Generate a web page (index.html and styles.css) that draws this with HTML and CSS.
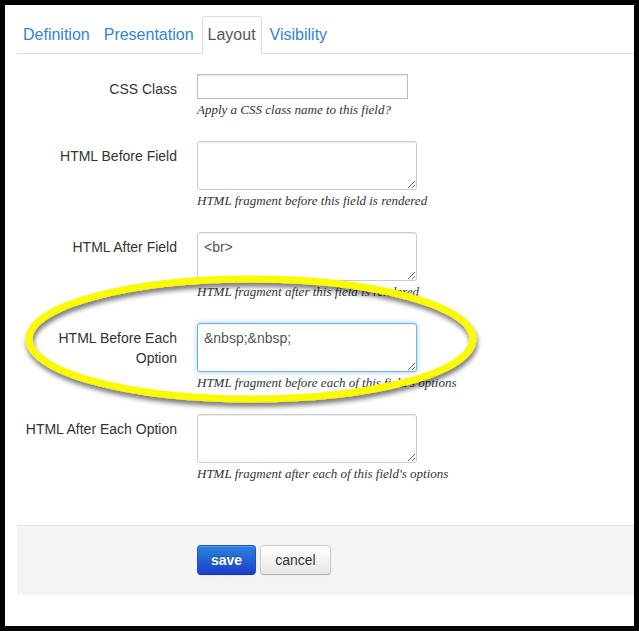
FILE: index.html
```html
<!DOCTYPE html>
<html lang="en">
<head>
    <meta charset="UTF-8">
    <meta name="viewport" content="width=device-width, initial-scale=1.0">
    <title>Field Layout</title>
    <link rel="stylesheet" href="styles.css">
</head>
<body>
    <div class="window">
        <ul class="tabs">
            <li><a href="#">Definition</a></li>
            <li><a href="#">Presentation</a></li>
            <li class="active"><a href="#">Layout</a></li>
            <li><a href="#">Visibility</a></li>
        </ul>

        <form class="form">
            <div class="row">
                <label class="label">CSS Class</label>
                <div class="control">
                    <input type="text" class="input">
                    <p class="help">Apply a CSS class name to this field?</p>
                </div>
            </div>

            <div class="row">
                <label class="label">HTML Before Field</label>
                <div class="control">
                    <textarea class="textarea"></textarea>
                    <p class="help">HTML fragment before this field is rendered</p>
                </div>
            </div>

            <div class="row">
                <label class="label">HTML After Field</label>
                <div class="control">
                    <textarea class="textarea">&lt;br&gt;</textarea>
                    <p class="help">HTML fragment after this field is rendered</p>
                </div>
            </div>

            <div class="row">
                <label class="label">HTML Before Each Option</label>
                <div class="control">
                    <textarea class="textarea focused">&amp;nbsp;&amp;nbsp;</textarea>
                    <p class="help">HTML fragment before each of this field's options</p>
                </div>
            </div>

            <div class="row">
                <label class="label">HTML After Each Option</label>
                <div class="control">
                    <textarea class="textarea"></textarea>
                    <p class="help">HTML fragment after each of this field's options</p>
                </div>
            </div>

            <div class="actions">
                <button type="button" class="btn btn-primary">save</button>
                <button type="button" class="btn">cancel</button>
            </div>
        </form>
    </div>

    <!-- annotation drawn over the screenshot -->
    <svg class="highlight" width="639" height="631" viewBox="0 0 639 631">
        <defs>
            <filter id="shadow" x="-10%" y="-30%" width="120%" height="160%">
                <feDropShadow dx="1" dy="4" stdDeviation="2.5" flood-color="#000" flood-opacity="0.55"/>
            </filter>
        </defs>
        <ellipse cx="251" cy="339" rx="222" ry="60" fill="none" stroke="#fafa00" stroke-width="7" filter="url(#shadow)"/>
    </svg>
</body>
</html>
```

FILE: styles.css
```css
body {
    margin: 0;
    padding: 5px;
    background: #000;
    font-family: 'Liberation Sans', Arial, sans-serif;
    font-size: 14px;
    color: #333;
    position: relative;
}

.window {
    background: #fff;
    height: 621px;
    padding: 11px 0 0 12px;
    box-sizing: border-box;
}

.tabs {
    display: flex;
    list-style: none;
    margin: 0;
    padding: 0;
    border-bottom: 1px solid #ddd;
}

.tabs li {
    margin-bottom: -1px;
    margin-right: 2px;
}

.tabs a {
    display: block;
    padding: 8px 5px;
    line-height: 20px;
    font-size: 16px;
    color: #3383d6;
    text-decoration: none;
    border: 1px solid transparent;
    border-radius: 4px 4px 0 0;
}

.tabs .active a {
    color: #555;
    background: #fff;
    border-color: #ddd #ddd #fff;
}

.form {
    margin-top: 20px;
}

.row {
    display: flex;
    margin-bottom: 22px;
}

.label {
    width: 160px;
    flex-shrink: 0;
    text-align: right;
    padding-top: 5px;
    line-height: 20px;
}

.control {
    margin-left: 20px;
}

.input,
.textarea {
    display: block;
    box-sizing: border-box;
    font-family: 'Liberation Sans', Arial, sans-serif;
    font-size: 14px;
    color: #555;
    border: 1px solid #ccc;
    border-radius: 3px;
    box-shadow: inset 0 1px 1px rgba(0, 0, 0, 0.075);
    margin: 0;
    outline: none;
}

.input {
    width: 211px;
    height: 25px;
    padding: 2px 6px;
    border-radius: 0;
    border-color: #bbb;
}

.textarea {
    width: 220px;
    height: 49px;
    padding: 4px 6px;
    line-height: 20px;
}

.textarea.focused {
    border-color: #76b0ea;
    box-shadow: inset 0 1px 1px rgba(0, 0, 0, 0.075), 0 0 5px rgba(82, 168, 236, 0.6);
}

.help {
    margin: 2px 0 0;
    line-height: 18px;
    font-family: 'Liberation Serif', 'Times New Roman', serif;
    font-style: italic;
    font-size: 13px;
    color: #333;
}

.actions {
    display: flex;
    gap: 4px;
    margin-top: 42px;
    padding: 19px 0 20px 180px;
    background: #f4f4f4;
    border-top: 1px solid #e5e5e5;
}

.btn {
    font-family: 'Liberation Sans', Arial, sans-serif;
    font-size: 14px;
    line-height: 20px;
    padding: 4px 14px;
    color: #333;
    background: linear-gradient(#fff, #e6e6e6);
    border: 1px solid #ccc;
    border-bottom-color: #b3b3b3;
    border-radius: 4px;
    box-shadow: inset 0 1px 0 rgba(255, 255, 255, 0.2), 0 1px 2px rgba(0, 0, 0, 0.05);
}

.btn-primary {
    padding: 4px 13px;
    color: #fff;
    font-weight: bold;
    background: linear-gradient(#2b82dc, #1b3fcc);
    border-color: #1d4fc9 #1d4fc9 #1436a8;
    text-shadow: 0 -1px 0 rgba(0, 0, 0, 0.25);
}

.highlight {
    position: absolute;
    top: 0;
    left: 0;
    pointer-events: none;
}
```
